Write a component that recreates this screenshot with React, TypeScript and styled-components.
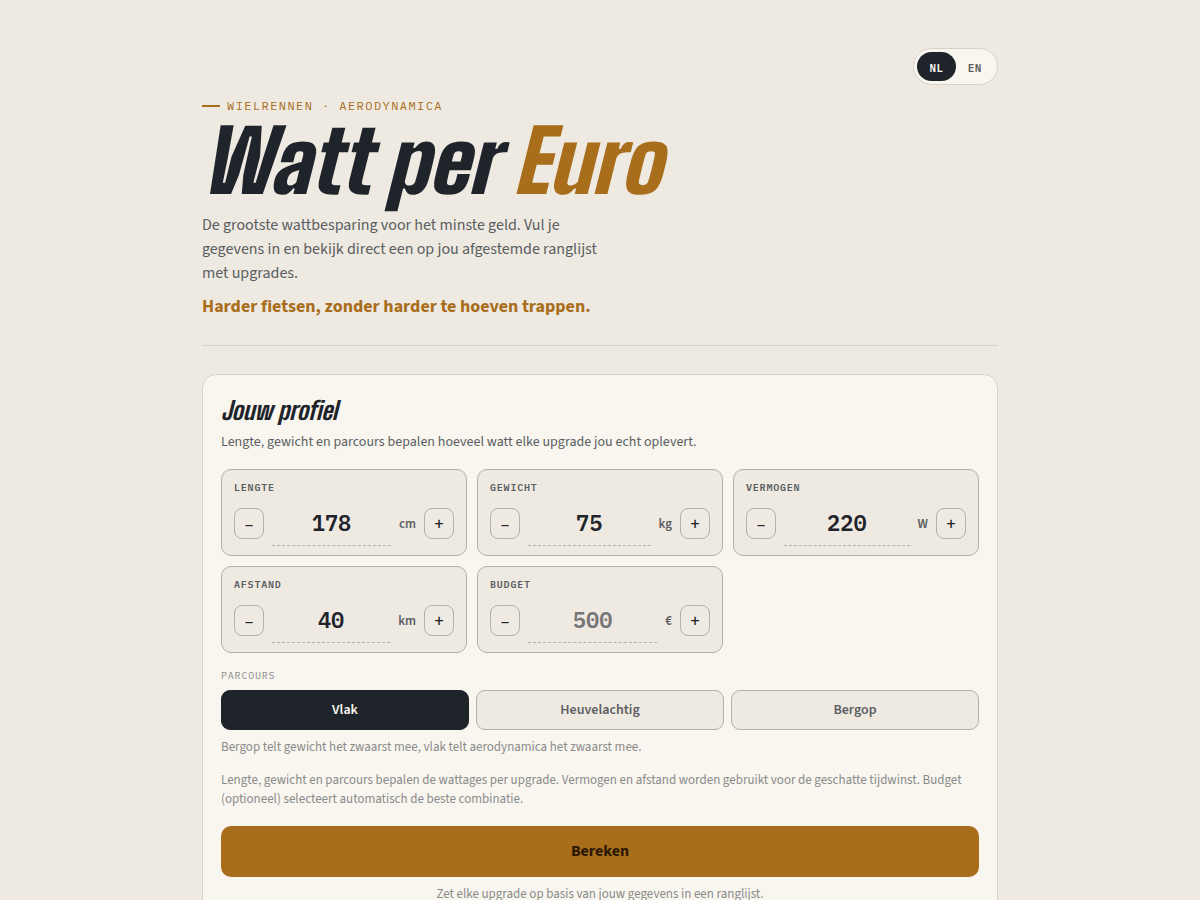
import React, { useState } from "react";
import styled, { createGlobalStyle } from "styled-components";

const color = {
  page: "#eee9e1",
  card: "#f9f6ef",
  ink: "#1f242b",
  muted: "#5a5e62",
  faint: "#8a8b8b",
  accent: "#a96e1c",
  line: "#b4b1aa",
  softLine: "#d6d2ca",
};

const sans = `"Source Sans 3", "Noto Sans CJK JP", "Open Sans", sans-serif`;
const mono = `"IBM Plex Mono", "Liberation Mono", monospace`;
const display = `"Big Shoulders Display", "Roboto Condensed", "Liberation Sans", sans-serif`;

const GlobalStyle = createGlobalStyle`
  *, *::before, *::after { box-sizing: border-box; }
  body {
    margin: 0;
    background: ${color.page};
    color: ${color.ink};
    font-family: ${sans};
  }
  button, input { font: inherit; color: inherit; margin: 0; }
  h1, h2, p, fieldset { margin: 0; }
`;

const Page = styled.main`
  max-width: 860px;
  margin: 0 auto;
  padding: 48px 32px;
`;

const Header = styled.header`
  display: flex;
  flex-direction: column;
  padding-bottom: 26px;
  border-bottom: 1px solid ${color.softLine};
`;

const LanguageSwitch = styled.div`
  align-self: flex-end;
  display: flex;
  padding: 3px;
  border: 1px solid ${color.softLine};
  border-radius: 999px;
  background: ${color.card};
`;

const LanguageButton = styled.button<{ $active: boolean }>`
  height: 29px;
  padding: 2px 12px 0;
  border: 0;
  border-radius: 999px;
  background: ${(p) => (p.$active ? color.ink : "transparent")};
  color: ${(p) => (p.$active ? color.card : color.muted)};
  font: 600 11px/16px ${mono};
  letter-spacing: 0.05em;
  cursor: pointer;
`;

const Eyebrow = styled.p`
  display: flex;
  align-items: center;
  gap: 7px;
  margin-top: 13px;
  color: ${color.accent};
  font: 400 12px/16px ${mono};
  letter-spacing: 0.12em;
  text-transform: uppercase;

  &::before {
    content: "";
    width: 18px;
    height: 2px;
    background: currentColor;
  }
`;

const Title = styled.h1`
  font: italic 900 86px/94px ${display};

  em { color: ${color.accent}; }
`;

const Intro = styled.p`
  max-width: 420px;
  margin-top: 5px;
  color: ${color.muted};
  font-size: 16px;
  line-height: 24px;
`;

const Tagline = styled.p`
  margin-top: 10px;
  color: ${color.accent};
  font-size: 18px;
  font-weight: 700;
  line-height: 24px;
`;

const Card = styled.form`
  display: flex;
  flex-direction: column;
  margin-top: 28px;
  padding: 18px;
  border: 1px solid ${color.softLine};
  border-radius: 14px;
  background: ${color.card};
`;

const CardTitle = styled.h2`
  font: italic 800 25px/34px ${display};
`;

const CardLead = styled.p`
  margin-top: 5px;
  color: ${color.muted};
  font-size: 14px;
  line-height: 20px;
`;

const FieldGrid = styled.div`
  display: grid;
  grid-template-columns: repeat(3, 1fr);
  gap: 10px;
  margin-top: 17px;

  @media (max-width: 700px) { grid-template-columns: 1fr; }
`;

const Field = styled.div`
  display: flex;
  flex-direction: column;
  gap: 5px;
  min-width: 0;
  padding: 10px 12px 9px;
  border: 1px solid ${color.line};
  border-radius: 10px;
  background: ${color.page};
`;

const FieldLabel = styled.label`
  color: ${color.muted};
  font: 600 10px/16px ${mono};
  letter-spacing: 0.08em;
  text-transform: uppercase;
`;

const Stepper = styled.div`
  display: flex;
  align-items: center;
  gap: 8px;
`;

const StepButton = styled.button`
  flex: none;
  width: 30px;
  height: 31px;
  padding: 2px 0 0;
  border: 1px solid ${color.line};
  border-radius: 8px;
  background: transparent;
  font-size: 18px;
  font-weight: 500;
  line-height: 27px;
  cursor: pointer;
`;

const NumberInput = styled.input`
  flex: 1;
  width: 0;
  min-width: 0;
  height: 45px;
  padding: 0 0 1px;
  border: 0;
  border-bottom: 1px dashed ${color.line};
  outline: 0;
  background: transparent;
  font: 600 22px/28px ${mono};
  text-align: center;

  &::placeholder { color: #757575; opacity: 1; }
`;

const Unit = styled.span`
  color: ${color.muted};
  font-size: 13px;
  font-weight: 600;
  line-height: 16px;
`;

const CourseGroup = styled.fieldset`
  min-width: 0;
  margin-top: 15px;
  padding: 0;
  border: 0;
`;

const CourseLegend = styled.legend`
  padding: 0;
  color: ${color.faint};
  font: 400 10px/16px ${mono};
  letter-spacing: 0.08em;
  text-transform: uppercase;
`;

const CourseOptions = styled.div`
  display: grid;
  grid-template-columns: repeat(3, 1fr);
  gap: 7px;
  margin-top: 6px;
`;

const CourseButton = styled.button<{ $active: boolean }>`
  height: 40px;
  border: 1px solid ${(p) => (p.$active ? color.ink : color.line)};
  border-radius: 9px;
  background: ${(p) => (p.$active ? color.ink : color.page)};
  color: ${(p) => (p.$active ? color.card : color.muted)};
  font-size: 14px;
  font-weight: 600;
  line-height: 20px;
  cursor: pointer;
`;

const Note = styled.p<{ $gap: number; $centered?: boolean }>`
  margin-top: ${(p) => p.$gap}px;
  color: ${color.faint};
  font-size: 13px;
  line-height: 19px;
  text-align: ${(p) => (p.$centered ? "center" : "left")};
`;

const SubmitButton = styled.button`
  height: 51px;
  margin-top: 17px;
  padding: 0 0 2px;
  border: 0;
  border-radius: 10px;
  background: ${color.accent};
  color: #2b1804;
  font-size: 16px;
  font-weight: 700;
  line-height: 24px;
  cursor: pointer;
`;

type FieldSpec = { id: string; label: string; unit: string; value: string; step: number; placeholder?: string };

const fields: FieldSpec[] = [
  { id: "height", label: "Lengte", unit: "cm", value: "178", step: 1 },
  { id: "weight", label: "Gewicht", unit: "kg", value: "75", step: 1 },
  { id: "power", label: "Vermogen", unit: "W", value: "220", step: 5 },
  { id: "distance", label: "Afstand", unit: "km", value: "40", step: 5 },
  { id: "budget", label: "Budget", unit: "€", value: "", step: 50, placeholder: "500" },
];

const courses = ["Vlak", "Heuvelachtig", "Bergop"];

function NumberField({ spec }: { spec: FieldSpec }) {
  const [value, setValue] = useState(spec.value);
  const change = (delta: number) =>
    setValue((v) => String(Math.max(0, Number(v || spec.placeholder || 0) + delta)));

  return (
    <Field>
      <FieldLabel htmlFor={spec.id}>{spec.label}</FieldLabel>
      <Stepper>
        <StepButton type="button" aria-label={`${spec.label} verlagen`} onClick={() => change(-spec.step)}>
          –
        </StepButton>
        <NumberInput
          id={spec.id}
          inputMode="numeric"
          value={value}
          placeholder={spec.placeholder}
          onChange={(e) => setValue(e.target.value)}
        />
        <Unit>{spec.unit}</Unit>
        <StepButton type="button" aria-label={`${spec.label} verhogen`} onClick={() => change(spec.step)}>
          +
        </StepButton>
      </Stepper>
    </Field>
  );
}

export default function App() {
  const [language, setLanguage] = useState("NL");
  const [course, setCourse] = useState("Vlak");

  return (
    <>
      <GlobalStyle />
      <Page>
        <Header>
          <LanguageSwitch role="group" aria-label="Taal">
            {["NL", "EN"].map((code) => (
              <LanguageButton
                key={code}
                type="button"
                $active={language === code}
                aria-pressed={language === code}
                onClick={() => setLanguage(code)}
              >
                {code}
              </LanguageButton>
            ))}
          </LanguageSwitch>
          <Eyebrow>Wielrennen · Aerodynamica</Eyebrow>
          <Title>
            Watt per <em>Euro</em>
          </Title>
          <Intro>
            De grootste wattbesparing voor het minste geld. Vul je gegevens in en bekijk direct een op jou
            afgestemde ranglijst met upgrades.
          </Intro>
          <Tagline>Harder fietsen, zonder harder te hoeven trappen.</Tagline>
        </Header>

        <Card onSubmit={(e) => e.preventDefault()}>
          <CardTitle>Jouw profiel</CardTitle>
          <CardLead>Lengte, gewicht en parcours bepalen hoeveel watt elke upgrade jou echt oplevert.</CardLead>

          <FieldGrid>
            {fields.map((spec) => (
              <NumberField key={spec.id} spec={spec} />
            ))}
          </FieldGrid>

          <CourseGroup>
            <CourseLegend>Parcours</CourseLegend>
            <CourseOptions>
              {courses.map((name) => (
                <CourseButton
                  key={name}
                  type="button"
                  $active={course === name}
                  aria-pressed={course === name}
                  onClick={() => setCourse(name)}
                >
                  {name}
                </CourseButton>
              ))}
            </CourseOptions>
          </CourseGroup>
          <Note $gap={8}>Bergop telt gewicht het zwaarst mee, vlak telt aerodynamica het zwaarst mee.</Note>
          <Note $gap={14}>
            Lengte, gewicht en parcours bepalen de wattages per upgrade. Vermogen en afstand worden gebruikt voor
            de geschatte tijdwinst. Budget (optioneel) selecteert automatisch de beste combinatie.
          </Note>

          <SubmitButton type="submit">Bereken</SubmitButton>
          <Note $gap={8} $centered>
            Zet elke upgrade op basis van jouw gegevens in een ranglijst.
          </Note>
        </Card>
      </Page>
    </>
  );
}
